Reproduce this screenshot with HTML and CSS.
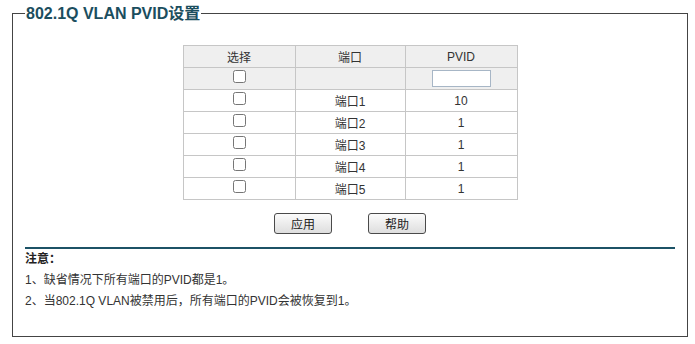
FILE: index.html
```html
<!DOCTYPE html>
<html lang="zh-CN">
<head>
    <meta charset="UTF-8">
    <title>802.1Q VLAN PVID设置</title>
    <link rel="stylesheet" href="styles.css">
</head>
<body>
    <fieldset class="panel">
        <legend>802.1Q VLAN PVID设置</legend>

        <table class="pvid-table">
            <tr class="head">
                <td class="col-sel">选择</td>
                <td class="col-port">端口</td>
                <td class="col-pvid">PVID</td>
            </tr>
            <tr class="head">
                <td><input type="checkbox"></td>
                <td></td>
                <td><input type="text" class="pvid-all"></td>
            </tr>
            <tr><td><input type="checkbox"></td><td>端口1</td><td>10</td></tr>
            <tr><td><input type="checkbox"></td><td>端口2</td><td>1</td></tr>
            <tr><td><input type="checkbox"></td><td>端口3</td><td>1</td></tr>
            <tr><td><input type="checkbox"></td><td>端口4</td><td>1</td></tr>
            <tr><td><input type="checkbox"></td><td>端口5</td><td>1</td></tr>
        </table>

        <div class="btns">
            <button type="button">应用</button>
            <button type="button">帮助</button>
        </div>

        <hr class="sep">

        <div class="notes">
            <div class="note-title">注意：</div>
            <div>1、缺省情况下所有端口的PVID都是1。</div>
            <div>2、当802.1Q VLAN被禁用后，所有端口的PVID会被恢复到1。</div>
        </div>
    </fieldset>
</body>
</html>
```

FILE: styles.css
```css
body { margin: 0; font: 12px "Liberation Sans", "Noto Sans CJK SC", sans-serif; color: #333; background: #fff; }

.panel { margin: 4px 0 0 12px; width: 676px; box-sizing: border-box; border: 1px solid #444; padding: 0 12px 0 12px; min-width: 0; }
.panel legend { padding: 0 1px; font-size: 16px; font-weight: bold; line-height: 19px; color: #1b4e5e; }

.pvid-table { margin: 22px auto 0; border-collapse: collapse; width: 335px; }
.pvid-table td { border: 1px solid #c6c6c6; height: 21px; padding: 0; text-align: center; vertical-align: middle; }
.pvid-table .head td { background: #efefef; }
.col-sel { width: 111px; }
.col-port { width: 109px; }
.pvid-table input[type=checkbox] { margin: 0 0 4px; width: 13px; height: 13px; vertical-align: middle; }
.pvid-all { width: 59px; height: 17px; box-sizing: border-box; border: 1px solid #a7b6c6; padding: 0; vertical-align: middle; }

.btns { display: flex; justify-content: center; gap: 36px; margin-top: 13px; }
.btns button { width: 58px; height: 21px; padding: 0; border: 1px solid #4a4a4a; border-radius: 3px; background: linear-gradient(#fbfbfb, #dedede); font: 12px "Liberation Sans", "Noto Sans CJK SC", sans-serif; color: #222; }

.sep { margin: 13px 0 0; border: 0; border-top: 2px solid #1c5266; height: 0; }

.notes { line-height: 21px; padding-bottom: 24px; }
.note-title { font-weight: bold; color: #222; }
```
